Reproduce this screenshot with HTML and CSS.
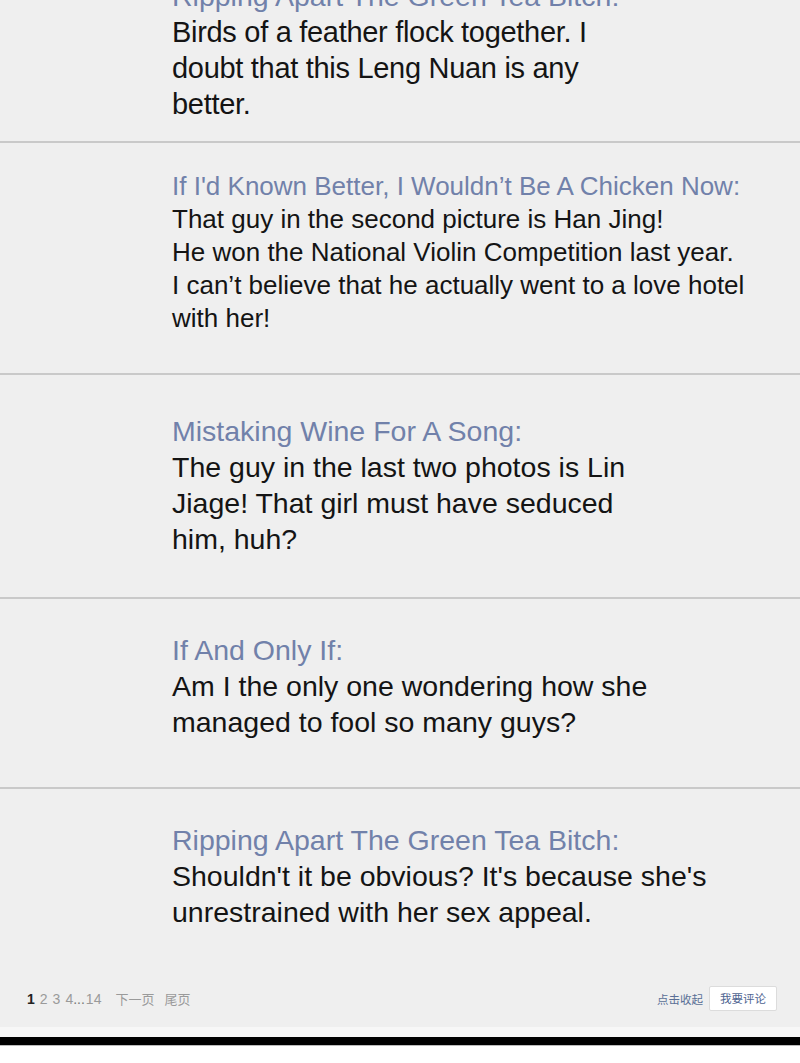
FILE: index.html
```
<!DOCTYPE html>
<html lang="en">
<head>
  <meta charset="UTF-8">
  <meta name="viewport" content="width=device-width, initial-scale=1.0">
  <title>Comments</title>
  <link rel="stylesheet" href="styles.css">
</head>
<body>
  <div class="page">
    <div class="post post-1">
      <div class="name">Ripping Apart The Green Tea Bitch:</div>
      <div class="text">Birds of a feather flock together. I<br>doubt that this Leng Nuan is any<br>better.</div>
    </div>

    <div class="post post-2">
      <div class="name">If I'd Known Better, I Wouldn’t Be A Chicken Now:</div>
      <div class="text">That guy in the second picture is Han Jing!<br>He won the National Violin Competition last year.<br>I can’t believe that he actually went to a love hotel<br>with her!</div>
    </div>

    <div class="post post-3">
      <div class="name">Mistaking Wine For A Song:</div>
      <div class="text">The guy in the last two photos is Lin<br>Jiage! That girl must have seduced<br>him, huh?</div>
    </div>

    <div class="post post-4">
      <div class="name">If And Only If:</div>
      <div class="text">Am I the only one wondering how she<br>managed to fool so many guys?</div>
    </div>

    <div class="post post-5">
      <div class="name">Ripping Apart The Green Tea Bitch:</div>
      <div class="text">Shouldn't it be obvious? It's because she's<br>unrestrained with her sex appeal.</div>
    </div>

    <div class="pager">
      <div class="pages">
        <span class="current">1</span>
        <a>2</a>
        <a>3</a>
        <a class="tight">4</a><span class="dots">...</span><a>14</a>
        <a class="next">下一页</a>
        <a class="last">尾页</a>
      </div>
      <div class="actions">
        <a class="fold">点击收起</a>
        <a class="reply-btn">我要评论</a>
      </div>
    </div>

    <div class="strip"></div>
  </div>
  <div class="black-bar"></div>
  <div class="bottom"></div>
</body>
</html>
```

FILE: styles.css
```
html, body {
  margin: 0;
  padding: 0;
  background: #fff;
}

body {
  font-family: 'Liberation Sans', Arial, sans-serif;
  color: #111;
  overflow: hidden;
}

.page {
  background: #efefef;
}

.post {
  padding-left: 172px;
  border-bottom: 2px solid #c9c9c9;
}

.name {
  color: #7181aa;
}

.text {
  color: #141414;
}

.post-1 {
  margin-top: -22px;
  padding-bottom: 19px;
  font-size: 29px;
  line-height: 36px;
  letter-spacing: -0.3px;
}

.post-1 .name {
  font-size: 28.5px;
  letter-spacing: 0;
}

.post-2 {
  padding-top: 27px;
  padding-bottom: 38px;
  font-size: 26px;
  line-height: 33px;
}

.post-3 {
  padding-top: 38px;
  padding-bottom: 40px;
  font-size: 28.5px;
  line-height: 36px;
}

.post-4 {
  padding-top: 33px;
  padding-bottom: 47px;
  font-size: 28.5px;
  line-height: 36px;
}

.post-5 {
  padding-top: 33px;
  padding-bottom: 56px;
  font-size: 28.5px;
  line-height: 36px;
  border-bottom: none;
}

.pager {
  display: flex;
  justify-content: space-between;
  align-items: center;
  height: 25px;
  padding: 0 23px 0 27px;
  font-size: 14px;
}

.pages {
  display: flex;
  align-items: center;
  color: #9a9a9a;
}

.pages a {
  margin-right: 5px;
}

.pages .tight {
  margin-right: 0;
}

.pages .current {
  color: #222;
  font-weight: bold;
  font-size: 14px;
  margin-right: 5px;
}

.pages .dots {
  margin-right: 1px;
  color: #777;
}

.pages .next {
  margin-left: 9px;
  margin-right: 10px;
  font-family: 'Noto Sans CJK SC', sans-serif;
  font-size: 13px;
}

.pages .last {
  font-family: 'Noto Sans CJK SC', sans-serif;
  font-size: 13px;
}

.actions {
  display: flex;
  align-items: center;
  gap: 6px;
  font-family: 'Noto Sans CJK SC', sans-serif;
  font-size: 11.5px;
  color: #5a6f96;
}

.reply-btn {
  display: inline-block;
  width: 66px;
  height: 23px;
  line-height: 23px;
  text-align: center;
  background: #fff;
  border: 1px solid #dcdcdc;
  border-radius: 2px;
  color: #4e6491;
}

.strip {
  height: 16px;
}

.black-bar {
  height: 10px;
  background: #f7f7f7;
  border-bottom: 8px solid #000;
}

.bottom {
  height: 40px;
  border-top: 1px solid #bbb;
  background: #fff;
}
```
